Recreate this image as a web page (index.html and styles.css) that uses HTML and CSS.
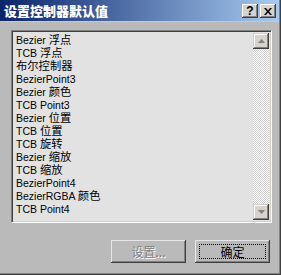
FILE: index.html
```html
<!DOCTYPE html>
<html>
    <head>
        <title>设置控制器默认值</title>
        <link rel="stylesheet" href="styles.css">
    </head>
    <body>
        <div class="window">
            <div class="titlebar">
                <span class="title">设置控制器默认值</span>
                <div class="caption-buttons">
                    <span class="cap-btn">?</span>
                    <span class="cap-btn">
                        <svg width="8" height="7" viewBox="0 0 8 7"><path d="M0 0h2l2 2.5 2-2.5h2l-3 3.5 3 3.5h-2l-2-2.5-2 2.5h-2l3-3.5z" fill="#000"/></svg>
                    </span>
                </div>
            </div>
            <div class="content">
                <div class="listbox">
                    <ul class="items">
                        <li>Bezier <span class="cn">浮点</span></li>
                        <li>TCB <span class="cn">浮点</span></li>
                        <li><span class="cn">布尔控制器</span></li>
                        <li>BezierPoint3</li>
                        <li>Bezier <span class="cn">颜色</span></li>
                        <li>TCB Point3</li>
                        <li>Bezier <span class="cn">位置</span></li>
                        <li>TCB <span class="cn">位置</span></li>
                        <li>TCB <span class="cn">旋转</span></li>
                        <li>Bezier <span class="cn">缩放</span></li>
                        <li>TCB <span class="cn">缩放</span></li>
                        <li>BezierPoint4</li>
                        <li>BezierRGBA <span class="cn">颜色</span></li>
                        <li>TCB Point4</li>
                    </ul>
                    <div class="scrollbar">
                        <span class="arrow-btn"><svg width="7" height="4" viewBox="0 0 7 4"><path d="M3.5 0L7 4H0z" fill="#808080"/></svg></span>
                        <div class="track"></div>
                        <span class="arrow-btn"><svg width="7" height="4" viewBox="0 0 7 4"><path d="M0 0h7L3.5 4z" fill="#808080"/></svg></span>
                    </div>
                </div>
                <div class="buttons">
                    <span class="btn disabled">设置...</span>
                    <span class="btn default"><span class="focus">确定</span></span>
                </div>
            </div>
        </div>
    </body>
</html>
```

FILE: styles.css
```css
html, body {
    margin: 0;
    padding: 0;
}
body {
    width: 281px;
    height: 275px;
    overflow: hidden;
    font-family: "Liberation Sans", "Noto Sans CJK SC", sans-serif;
}
.window {
    box-sizing: border-box;
    width: 281px;
    height: 275px;
    padding: 0 2px 3px 0;
    background-color: #bababa;
    box-shadow: inset -1px -1px #404040, inset -2px -2px #808080;
    display: flex;
    flex-direction: column;
}
.titlebar {
    height: 21px;
    flex: none;
    display: flex;
    align-items: center;
    justify-content: space-between;
    padding: 0 3px 0 4px;
    background: linear-gradient(to right, #0a246a, #a6caf0);
    border-bottom: 1px solid #c8c8c8;
}
.title {
    color: #fff;
    font-family: "Noto Sans CJK SC", sans-serif;
    font-weight: 900;
    font-size: 13px;
    line-height: 13px;
}
.caption-buttons {
    display: flex;
    gap: 2px;
    padding-top: 1px;
}
.cap-btn {
    box-sizing: border-box;
    width: 16px;
    height: 14px;
    background-color: #d6d3ce;
    box-shadow: inset -1px -1px #404040, inset 1px 1px #fff, inset -2px -2px #808080;
    display: flex;
    align-items: center;
    justify-content: center;
    font-family: "Liberation Sans", sans-serif;
    font-weight: bold;
    font-size: 12px;
    color: #000;
}
.content {
    flex: 1;
    padding: 8px 7px 0 11px;
    display: flex;
    flex-direction: column;
}
.listbox {
    box-sizing: border-box;
    height: 193px;
    display: flex;
    background-color: #e2e2e2;
    border: 1px solid;
    border-color: #808080 #fff #fff #808080;
    box-shadow: inset 1px 1px #404040, inset -1px -1px #d4d0c8;
    padding: 2px 2px 2px 2px;
}
.items {
    flex: 1;
    list-style-type: none;
    margin: 0;
    padding: 1px 0 0 2px;
}
.items li {
    height: 13px;
    line-height: 13px;
    font-size: 10.5px;
    color: #000;
    white-space: nowrap;
}
.cn {
    font-size: 11.3px;
}
.scrollbar {
    width: 16px;
    display: flex;
    flex-direction: column;
}
.arrow-btn {
    box-sizing: border-box;
    width: 16px;
    height: 16px;
    flex: none;
    background-color: #d6d3ce;
    box-shadow: inset -1px -1px #404040, inset 1px 1px #d4d0c8, inset -2px -2px #808080, inset 2px 2px #fff;
    display: flex;
    align-items: center;
    justify-content: center;
}
.track {
    flex: 1;
    background: repeating-conic-gradient(#fff 0 25%, #cfcfcf 0 50%) 0 0 / 2px 2px;
}
.buttons {
    display: flex;
    justify-content: flex-end;
    gap: 9px;
    margin-top: 17px;
    padding-right: 2px;
}
.btn {
    box-sizing: border-box;
    width: 75px;
    height: 23px;
    display: flex;
    align-items: center;
    justify-content: center;
    font-family: "Noto Sans CJK SC", sans-serif;
    font-size: 12px;
    color: #000;
    background-color: #bababa;
    box-shadow: inset -1px -1px #404040, inset 1px 1px #e6e6e6, inset -2px -2px #808080;
}
.btn.disabled {
    color: #808080;
    text-shadow: 1px 1px #fff;
}
.btn.default {
    padding: 4px;
}
.focus {
    box-sizing: border-box;
    width: 100%;
    height: 100%;
    display: flex;
    align-items: center;
    justify-content: center;
    border: 1px dotted #000;
}
```
